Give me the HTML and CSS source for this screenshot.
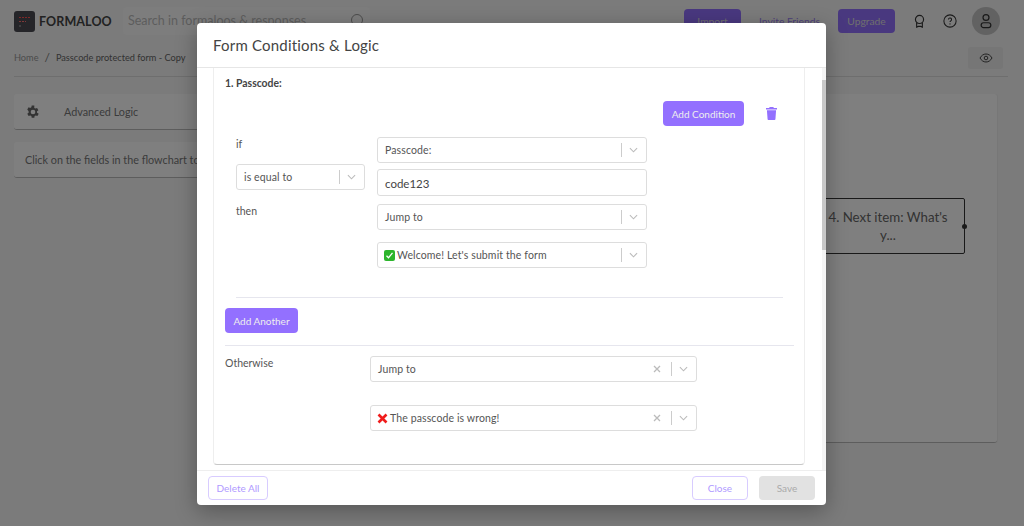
FILE: index.html
```html
<!DOCTYPE html>
<html lang="en">
<head>
<meta charset="utf-8">
<title>Form Conditions &amp; Logic</title>
<link rel="stylesheet" href="styles.css">
</head>
<body>
<div class="page">
  <header class="topbar">
    <div class="brand">
      <svg class="brand-mark" viewBox="0 0 21 21"><rect width="21" height="21" rx="3" fill="#4a4a52"/><path d="M5 6.500h11" stroke="#ff5050" stroke-width="1.200" stroke-dasharray="2 1"/><path d="M5 10.500h7" stroke="#ff7070" stroke-width="1.200" stroke-dasharray="2 1"/><path d="M6.500 14l-1 1 1 1" stroke="#ccc" stroke-width=".8" fill="none"/></svg>
      <span class="brand-name">FORMALOO</span>
    </div>
    <div class="search">
      <span>Search in formaloos &amp; responses</span>
      <svg class="search-icon" viewBox="0 0 14 14"><circle cx="7" cy="7" r="5.500" fill="none" stroke="#999" stroke-width="1"/></svg>
    </div>
    <div class="top-actions">
      <span class="top-btn">Import</span>
      <span class="top-link">Invite Friends</span>
      <span class="top-btn">Upgrade</span>
      <svg class="top-icon award" viewBox="0 0 16 18"><circle cx="8" cy="6.500" r="5" fill="none" stroke="#333" stroke-width="1.400"/><path d="M4.500 10.500V16l2-1h3l2 1v-5.500" fill="none" stroke="#333" stroke-width="1.400"/></svg>
      <svg class="top-icon help" viewBox="0 0 16 16"><circle cx="8" cy="8" r="7" fill="none" stroke="#333" stroke-width="1.200"/><path d="M6.200 6.300a1.800 1.800 0 1 1 2.600 1.600c-.6.3-.8.6-.8 1.300" fill="none" stroke="#333" stroke-width="1.200"/><circle cx="8" cy="11.400" r=".7" fill="#333"/></svg>
      <span class="avatar"><svg viewBox="0 0 16 18"><circle cx="8" cy="5" r="3.400" fill="none" stroke="#333" stroke-width="1.400"/><rect x="2.500" y="11" width="11" height="5.500" rx="2.700" fill="none" stroke="#333" stroke-width="1.400"/></svg></span>
    </div>
  </header>
  <div class="crumbs">
    <span class="crumb-home">Home</span>
    <span class="crumb-sep">/</span>
    <span class="crumb-cur">Passcode protected form - Copy</span>
    <span class="eye-btn"><svg viewBox="0 0 14 10"><path d="M1 5c1.500-2.600 3.500-4 6-4s4.500 1.400 6 4c-1.500 2.600-3.500 4-6 4S2.500 7.600 1 5z" fill="none" stroke="#444" stroke-width="1"/><circle cx="7" cy="5" r="1.800" fill="none" stroke="#444" stroke-width="1"/></svg></span>
  </div>
  <main class="workspace">
    <aside class="side">
      <div class="panel panel-head">
        <svg class="gear" viewBox="1.400 0 24 24"><path fill="#666" d="M19.400 13c.1-.3.100-.7.100-1s0-.7-.1-1l2.100-1.600-2-3.500-2.500 1c-.5-.4-1.100-.7-1.700-1L15.400 2.300h-4l-.4 2.600c-.6.3-1.200.6-1.700 1l-2.500-1-2 3.500L6.900 11c-.1.300-.1.700-.1 1s0 .7.100 1l-2.100 1.600 2 3.500 2.500-1c.5.400 1.100.7 1.700 1l.4 2.600h4l.4-2.600c.6-.3 1.200-.6 1.700-1l2.500 1 2-3.500zM13.400 15.500a3.500 3.500 0 1 1 0-7 3.500 3.500 0 0 1 0 7z"/></svg>
        <span>Advanced Logic</span>
      </div>
      <div class="panel panel-note">Click on the fields in the flowchart to edit logic</div>
    </aside>
    <section class="canvas">
      <div class="flow-node">4. Next item: What's y...<i class="flow-dot"></i></div>
    </section>
  </main>
</div>
<div class="backdrop"></div>
<div class="modal">
  <div class="modal-title">Form Conditions &amp; Logic</div>
  <div class="modal-body">
    <div class="card">
      <div class="field-name">1. Passcode:</div>
      <div class="cond-actions">
        <button class="btn btn-primary btn-cond">Add Condition</button>
        <svg class="trash" viewBox="0 0 12 14"><path fill="#9370ff" d="M4 0h4l.6 1H12v1.500H0V1h3.400zM1 3.500h10l-.7 9.500a1 1 0 0 1-1 1H2.700a1 1 0 0 1-1-1z"/></svg>
      </div>
      <div class="cond-grid">
        <div class="cond-left">
          <div class="lbl lbl-if">if</div>
          <div class="select"><span class="sel-text">is equal to</span><i class="sep"></i><svg class="chev" viewBox="0 0 10 6"><path d="M1 1l4 4 4-4"/></svg></div>
          <div class="lbl lbl-then">then</div>
        </div>
        <div class="cond-right">
          <div class="select"><span class="sel-text">Passcode:</span><i class="sep"></i><svg class="chev" viewBox="0 0 10 6"><path d="M1 1l4 4 4-4"/></svg></div>
          <div class="input">code123</div>
          <div class="select"><span class="sel-text">Jump to</span><i class="sep"></i><svg class="chev" viewBox="0 0 10 6"><path d="M1 1l4 4 4-4"/></svg></div>
          <div class="select sel-gap"><span class="sel-text"><svg class="emoji" viewBox="0 0 11 11"><rect width="11" height="11" rx="2" fill="#2cb52c"/><path d="M2.500 5.800l2 2 4-5" fill="none" stroke="#fff" stroke-width="1.300"/></svg>Welcome! Let's submit the form</span><i class="sep"></i><svg class="chev" viewBox="0 0 10 6"><path d="M1 1l4 4 4-4"/></svg></div>
        </div>
      </div>
      <hr class="rule rule-inner">
      <button class="btn btn-primary btn-another">Add Another</button>
      <hr class="rule rule-outer">
      <div class="other">
        <div class="lbl lbl-other">Otherwise</div>
        <div class="other-fields">
          <div class="select"><span class="sel-text">Jump to</span><svg class="clear" viewBox="0 0 8 8"><path d="M1 1l6 6M7 1L1 7"/></svg><i class="sep"></i><svg class="chev" viewBox="0 0 10 6"><path d="M1 1l4 4 4-4"/></svg></div>
          <div class="select"><span class="sel-text"><svg class="emoji" viewBox="0 0 11 11"><path d="M1.500 1.500l8 8M9.500 1.500l-8 8" stroke="#f01c1c" stroke-width="2.600"/></svg>The passcode is wrong!</span><svg class="clear" viewBox="0 0 8 8"><path d="M1 1l6 6M7 1L1 7"/></svg><i class="sep"></i><svg class="chev" viewBox="0 0 10 6"><path d="M1 1l4 4 4-4"/></svg></div>
        </div>
      </div>
    </div>
    <div class="scrollbar"><i class="thumb"></i></div>
  </div>
  <div class="modal-foot">
    <button class="btn btn-ghost btn-delete">Delete All</button>
    <span class="foot-right">
      <button class="btn btn-ghost btn-close">Close</button>
      <button class="btn btn-save">Save</button>
    </span>
  </div>
</div>
</body>
</html>
```

FILE: styles.css
```css
* { box-sizing: border-box; }
html, body { margin: 0; height: 100%; }
body { width: 1024px; height: 526px; overflow: hidden; background: #f6f6f6; font-family: "Lato", "Liberation Sans", sans-serif; color: #444; position: relative; }
button { font-family: inherit; cursor: pointer; }

.page { height: 526px; padding: 0 14px; display: flex; flex-direction: column; }
.topbar { height: 42px; display: flex; align-items: center; }
.brand { display: flex; align-items: center; gap: 4px; width: 109px; }
.brand-mark { width: 21px; height: 21px; flex: none; }
.brand-name { font-size: 12.500px; font-weight: 700; letter-spacing: .1px; color: #444; }
.search { width: 247px; display: flex; align-items: center; justify-content: space-between; font-size: 12.500px; color: #bbb; padding: 0 6px 2px 5px; height: 28px; background: #fafafa; border-radius: 4px; }
.search-icon { width: 14px; height: 14px; }
.top-actions { margin-left: auto; display: flex; align-items: center; margin-right: 10px; }
.top-btn { width: 57px; height: 24px; background: #9370ff; color: #ddd; border-radius: 4px; font-size: 10.300px; display: flex; align-items: center; justify-content: center; }
.top-link { width: 97px; text-align: center; font-size: 10.300px; color: #9a80f5; }
.top-icon { flex: none; }
.award { width: 13px; height: 15px; margin-left: 18px; }
.help { width: 14px; height: 14px; margin-left: 17px; }
.avatar { width: 28px; height: 28px; border-radius: 50%; background: #c4c4c4; margin-left: 15px; display: flex; align-items: center; justify-content: center; }
.avatar svg { width: 14px; height: 16px; }

.crumbs { height: 35px; display: flex; align-items: center; border-bottom: 1px solid #ddd; font-size: 9.200px; padding-bottom: 3px; margin-right: 2px; }
.crumb-home { color: #999; }
.crumb-sep { margin: 0 6px; font-size: 12px; color: #777; }
.crumb-cur { color: #666; }
.eye-btn { margin-left: auto; margin-right: 5px; width: 35px; height: 22px; background: #ececec; border-radius: 3px; display: flex; align-items: center; justify-content: center; }
.eye-btn svg { width: 14px; height: 10px; }

.workspace { display: flex; gap: 10px; margin-top: 17px; margin-right: 13px; }
.side { width: 330px; display: flex; flex-direction: column; gap: 12px; }
.panel { height: 36px; background: #fff; border-bottom: 1px solid #bbb; border-radius: 3px; display: flex; align-items: center; font-size: 10.800px; color: #777; }
.panel-head { padding-left: 11px; gap: 23px; }
.panel-note { padding-left: 11px; }
.gear { width: 16px; height: 16px; }
.canvas { flex: 1; height: 349px; background: #fff; border-radius: 3px; border-bottom: 1px solid #bbb; box-shadow: 1px 0 0 #eee; position: relative; }
.flow-node { position: absolute; right: 32px; top: 104px; width: 180px; height: 56px; border: 1px solid #333; border-radius: 2px; display: flex; align-items: center; justify-content: center; text-align: center; padding: 0 12px 0 38px; font-size: 13.300px; line-height: 18px; color: #666; background: #fff; }
.flow-dot { position: absolute; right: -3px; top: 25px; width: 5px; height: 5px; border-radius: 50%; background: #333; }

.backdrop { position: absolute; inset: 0; background: rgba(0, 0, 0, .5); }
.modal { position: absolute; left: 197px; top: 23px; width: 629px; height: 482px; background: #fff; border-radius: 4px; box-shadow: 0 6px 22px rgba(0, 0, 0, .3); display: flex; flex-direction: column; overflow: hidden; }
.modal-title { height: 45px; flex: none; border-bottom: 1px solid #e6e6e6; padding: 0 16px; display: flex; align-items: center; font-size: 15px; color: #444; letter-spacing: .2px; }
.modal-body { flex: none; height: 402px; padding-left: 16px; position: relative; }
.card { width: 592px; height: 397px; border: 1px solid #eee; border-top: 0; border-bottom: 1px solid #c8c8c8; border-radius: 0 0 4px 4px; padding: 0 11px; }
.field-name { font-size: 10.400px; font-weight: 700; color: #444; padding-top: 9px; height: 33px; }
.cond-actions { display: flex; align-items: center; padding-left: 438px; height: 25px; }
.trash { width: 11px; height: 13px; margin-left: 22px; }
.btn { border-radius: 4px; font-size: 10px; border: 0; padding: 0; }
.btn-primary { background: #9370ff; color: #eee; }
.btn-cond { width: 81px; height: 25px; }
.cond-grid { display: flex; gap: 12px; padding-left: 11px; margin-top: 11px; }
.cond-left { width: 129px; }
.cond-right { width: 270px; display: flex; flex-direction: column; }
.lbl { font-size: 10.500px; color: #555; }
.lbl-if { height: 27px; padding-top: 1px; }
.lbl-then { margin-top: 15px; }
.select { height: 26px; background: #fff; border: 1px solid #ddd; border-radius: 3px; display: flex; align-items: center; padding: 0 8px 0 7px; font-size: 10.500px; letter-spacing: .12px; color: #555; }
.sel-text { flex: 1; display: flex; align-items: center; gap: 2px; }
.sep { width: 1px; height: 14px; background: #ccc; margin: 0 7px 0 6px; }
.chev { width: 9px; height: 6px; fill: none; stroke: #bbb; stroke-width: 1.200; }
.clear { width: 8px; height: 8px; fill: none; stroke: #bbb; stroke-width: 1.300; margin-right: 4px; }
.emoji { width: 11px; height: 11px; flex: none; margin-left: -1px; }
.input { height: 27px; margin: 6px 0 8px; border: 1px solid #ddd; border-radius: 3px; display: flex; align-items: center; padding: 1px 7px 0; font-size: 11.500px; color: #444; }
.sel-gap { margin-top: 12px; }
.rule { border: 0; border-top: 1px solid #e6e6ee; margin: 0; }
.rule-inner { margin: 29px 10px 0 11px; }
.btn-another { width: 73px; height: 25px; margin-top: 10px; display: block; }
.rule-outer { margin: 12px -1px 0 0; }
.other { display: flex; padding-top: 10px; }
.lbl-other { width: 145px; padding-top: 1px; }
.other-fields { width: 327px; display: flex; flex-direction: column; gap: 23px; }
.scrollbar { position: absolute; right: 0; top: 0; width: 4px; bottom: 0; background: #f4f4f4; }
.thumb { display: block; margin-top: 12px; height: 170px; background: #c8c8c8; }

.modal-foot { flex: 1; display: flex; align-items: center; justify-content: space-between; padding: 0 11px; border-top: 1px solid #eee; }
.foot-right { display: flex; gap: 11px; }
.btn-ghost { height: 24px; background: #fff; border: 1px solid #d8ccff; color: #b09aff; }
.btn-delete { width: 60px; }
.btn-close { width: 56px; }
.btn-save { width: 56px; height: 24px; background: #e2e2e2; color: #aaa; }
```
